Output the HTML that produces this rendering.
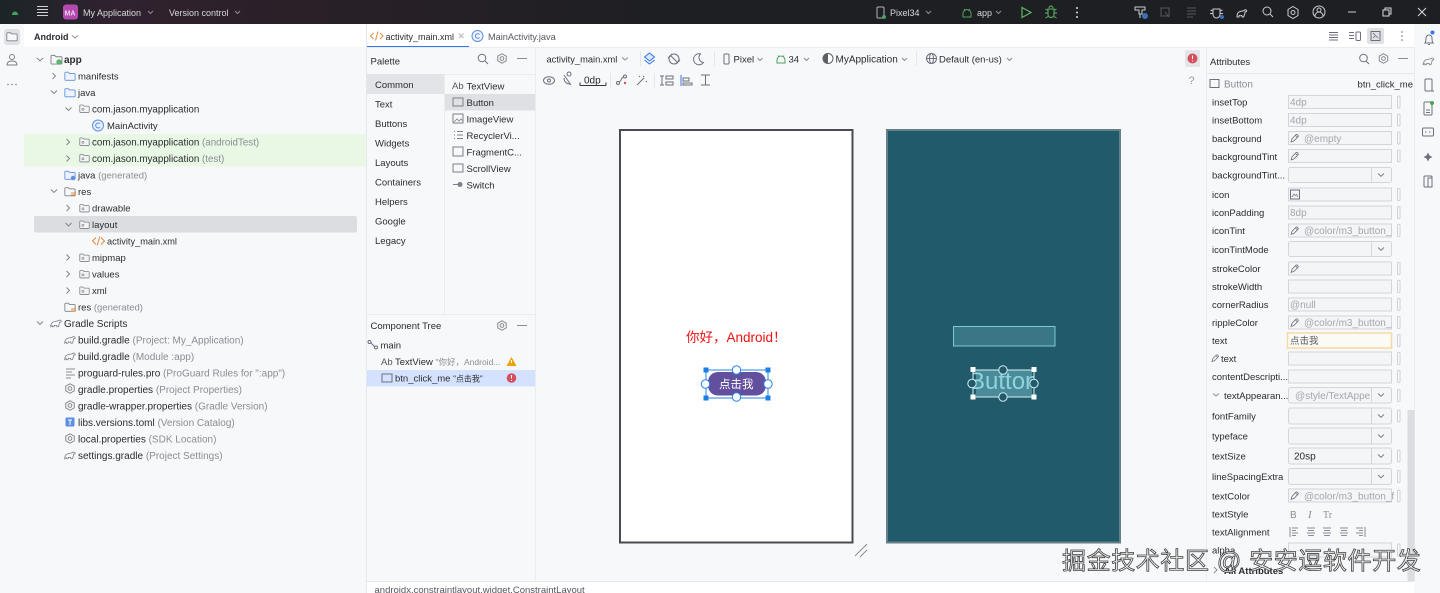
<!DOCTYPE html>
<html><head><meta charset="utf-8"><style>
html,body{margin:0;padding:0;width:1440px;height:593px;overflow:hidden;background:#fff}
svg.root{display:block;filter:blur(.3px)}
text{font-family:"Liberation Sans","Noto Sans CJK SC",sans-serif;font-size:10px;fill:#2a2c30}
.g{fill:#8a8d94}.w{fill:#d8dadf;font-size:9px}.l{font-size:9.5px}.s{font-size:9.5px}
.i{fill:none;stroke:#6c707e;stroke-width:1}
.f{fill:#f4f5f7;stroke:#d3d5da;stroke-width:1}
.ph{fill:#a3a6ad}
</style></head><body>
<svg class="root" width="1440" height="593" viewBox="0 0 1440 593" xmlns="http://www.w3.org/2000/svg">
<defs>
<linearGradient id="tb" x1="0" x2="1" y1="0" y2="0"><stop offset="0" stop-color="#1c2427"/><stop offset=".08" stop-color="#30222f"/><stop offset=".2" stop-color="#2a2028"/><stop offset=".45" stop-color="#1e1f23"/><stop offset="1" stop-color="#1e1f22"/></linearGradient>
<symbol id="fo" viewBox="0 0 14 12" overflow="visible"><path d="M1 2.5a1 1 0 0 1 1-1h3l1.5 1.5H12a1 1 0 0 1 1 1V10a1 1 0 0 1-1 1H2a1 1 0 0 1-1-1z" fill="#eef3ff" stroke="#5d8fe0"/></symbol>
<symbol id="fg" viewBox="0 0 14 12" overflow="visible"><path d="M1 2.5a1 1 0 0 1 1-1h3l1.5 1.5H12a1 1 0 0 1 1 1V10a1 1 0 0 1-1 1H2a1 1 0 0 1-1-1z" fill="#f7f8fa" stroke="#7c8088"/></symbol>
<symbol id="pk" viewBox="0 0 14 12" overflow="visible"><path d="M1 2.5a1 1 0 0 1 1-1h3l1.5 1.5H12a1 1 0 0 1 1 1V10a1 1 0 0 1-1 1H2a1 1 0 0 1-1-1z" fill="#f2f3f5" stroke="#7c8088"/><circle cx="5" cy="7" r="1.3" fill="none" stroke="#7c8088" stroke-width=".8"/></symbol>
<symbol id="ge" viewBox="0 0 12 12" overflow="visible"><path d="M6 .8l4.6 2.6v5.2L6 11.2 1.4 8.6V3.4z" fill="none" stroke="#7c8088"/><circle cx="6" cy="6" r="2" fill="none" stroke="#7c8088"/></symbol>
<symbol id="gr" viewBox="0 0 13 10" overflow="visible"><path d="M.6 9.2c0-3 1.5-5 3.5-5.6C6 3 8 3 9.3 2.4c.9-.9 2.6-.9 3 .4.2 1-.7 1.5-1.6 1.1-.3 2-1 3.6-1.5 5.3H7.6L7.2 7.7c-1 .3-1.6.3-2.6 0L4.2 9.2H2.6L2.3 8z" fill="none" stroke="#7c8088" stroke-width=".9"/></symbol>
<symbol id="pe" viewBox="0 0 11 11" overflow="visible"><path d="M1.2 9.8l1-3.4 4-4.2a1.4 1.4 0 0 1 2.3 2.3l-4.1 4.2z M6 2.6l2.1 2.1" fill="none" stroke="#6c707e" stroke-width=".9"/></symbol>
</defs>

<!-- base -->
<rect width="1440" height="593" fill="#ffffff"/>
<rect x="0" y="24" width="24" height="569" fill="#f7f8fa"/>
<rect x="24" y="47" width="342" height="546" fill="#f7f8fa"/>
<rect x="24" y="24" width="342" height="23" fill="#fff"/>
<rect x="367" y="47" width="1047" height="534" fill="#f7f8fa"/>
<rect x="536" y="94" width="670" height="487" fill="#f7f8fa"/>
<rect x="1414" y="47" width="26" height="546" fill="#f7f8fa"/>
<rect x="1414" y="24" width="26" height="23" fill="#f7f8fa"/>
<rect x="366" y="24" width="1" height="569" fill="#e6e7ea"/>

<!-- title bar -->
<rect width="1440" height="24" fill="url(#tb)"/>
<path d="M12 14.5a3 3 0 0 1 6 0v.5h-6z" fill="#3ba55c"/>
<path d="M37 6.5h11M37 9.5h11M37 12.5h11M37 15.5h11" stroke="#cfd1d6" stroke-width="1.1"/>
<rect x="63" y="4.5" width="15" height="15" rx="3" fill="#b44ab0"/>
<text x="64.500" y="15.500" style="font-size:7px;font-weight:bold;fill:#f0d5ee">MA</text>
<text x="83" y="16" class="w">My Application</text>
<path d="M148 11l2.5 2.5 2.5-2.5M235 11l2.5 2.5 2.5-2.5" style="fill:none;stroke:#8a8d94"/>
<text x="169" y="16" class="w">Version control</text>
<rect x="877" y="7" width="7" height="11" rx="1" fill="none" stroke="#b0b3b9"/><circle cx="884" cy="17" r="2" fill="#4fa05c"/>
<text x="890" y="16" class="w">Pixel34</text>
<path d="M926 11l2.5 2.5 2.5-2.5M996 11l2.5 2.5 2.5-2.5" style="fill:none;stroke:#8a8d94"/>
<path d="M963 17v-3.5a4 4 0 0 1 8 0V17z M964 9l1.4 2M970 9l-1.4 2" fill="none" stroke="#4fa05c"/>
<text x="977" y="16" class="w">app</text>
<path d="M1022 7.5l9 5-9 5z" fill="none" stroke="#5fb865" stroke-width="1.2"/>
<path d="M1048 9h6v5.5a3 3 0 0 1-6 0z M1045.5 9l2.5 1.5M1056.5 9l-2.5 1.5M1045 13h3M1054 13h3M1045.5 18l2.5-1.5M1056.5 18l-2.5-1.5M1049 8a2 2 0 0 1 4 0" fill="none" stroke="#5fb865"/>
<circle cx="1077" cy="8" r="1" fill="#d8dadf"/><circle cx="1077" cy="12.5" r="1" fill="#d8dadf"/><circle cx="1077" cy="17" r="1" fill="#d8dadf"/>
<path d="M1135 7h10v3h-3v4h-3v-4h-4zM1140 14v4" fill="none" stroke="#c9ccd2"/><circle cx="1145" cy="16" r="3" fill="#3b6fc0"/>
<path d="M1161 8h8v8h-8zM1165 12l4 5" fill="none" stroke="#55575d"/>
<path d="M1187 8h9M1187 11h9M1187 14h9M1187 17h6" fill="none" stroke="#55575d"/>
<path d="M1213 9h7v5.5a3.5 3.5 0 0 1-7 0zM1210.5 10l2.5 1M1222.5 10l-2.5 1M1210 13.5h3M1220 13.5h3" fill="none" stroke="#c9ccd2"/><circle cx="1222" cy="17" r="2" fill="#3b6fc0"/>
<path d="M1237 17c0-3 1-5 3-5.500 2-.5 3-.5 4-1 .8-1 2.400-1 2.700.2.200 1-1 1.300-1.500 1-.2 2-.8 3.500-1.500 5.300h-1.500l-.4-1.500c-1 .3-1.600.3-2.600 0l-.4 1.500z" fill="none" stroke="#c9ccd2"/>
<circle cx="1267" cy="11" r="4" fill="none" stroke="#c9ccd2"/><path d="M1270 14l3 3" stroke="#c9ccd2"/>
<path d="M1293 6.500l5 3v6l-5 3-5-3v-6z" fill="none" stroke="#c9ccd2"/><circle cx="1293" cy="12.500" r="2" fill="none" stroke="#c9ccd2"/>
<circle cx="1319" cy="12" r="6" fill="none" stroke="#c9ccd2"/><circle cx="1319" cy="10" r="2" fill="none" stroke="#c9ccd2"/><path d="M1315 16a4 4 0 0 1 8 0" fill="none" stroke="#c9ccd2"/>
<path d="M1348 12h8" stroke="#c9ccd2"/>
<path d="M1383 10h6v6h-6zM1385 10V8h6v6h-2" fill="none" stroke="#d8dadf"/>
<path d="M1418 8l8 8M1426 8l-8 8" stroke="#d8dadf"/>

<!-- left strip -->
<rect x="4" y="29" width="16" height="16" rx="3" fill="#dfe1e5"/>
<use href="#fg" x="6" y="31" width="12" height="11"/>
<circle cx="12" cy="57" r="2.500" fill="none" stroke="#7c8088"/><path d="M7 65c0-3 2-4 5-4s5 1 5 4z" fill="none" stroke="#7c8088"/>
<circle cx="8" cy="84.500" r=".7" fill="#6c707e"/><circle cx="12" cy="84.500" r=".7" fill="#6c707e"/><circle cx="16" cy="84.500" r=".7" fill="#6c707e"/>

<!-- Project panel -->
<text x="34" y="40" style="font-size:9px;font-weight:bold">Android</text>
<path d="M72 35.500l3 2.500 3-2.500" class="i" style="stroke:#8a8d94"/>
<rect x="24" y="134" width="342" height="32.500" fill="#e9f8e5"/>
<rect x="34" y="216" width="323" height="16.500" rx="2" fill="#dcdde1"/>

<!-- chevrons tree -->
<g fill="none" stroke="#7c8088" stroke-width=".9">
<path d="M37 58l3 3 3-3M51 90.500l3 3 3-3M65.500 107.500l3 3 3-3M51 189.500l3 3 3-3M65.500 223l3 3 3-3M37 321.500l3 3 3-3"/>
<path d="M52.500 73l3 3-3 3M66.500 139l3 3-3 3M66.500 155.500l3 3-3 3M66.500 205l3 3-3 3M66.500 254.500l3 3-3 3M66.500 271l3 3-3 3M66.500 287.500l3 3-3 3"/>
</g>
<use href="#fg" x="50" y="54" width="13" height="11"/><circle cx="59" cy="62" r="2.700" fill="#5db56a"/>
<use href="#fo" x="64" y="70.500" width="12" height="11"/>
<use href="#fo" x="64" y="87" width="12" height="11"/>
<use href="#pk" x="79" y="103.500" width="11" height="10"/>
<circle cx="98" cy="125.500" r="5.500" fill="#e6efff" stroke="#5d8fe0"/><path d="M100 123.800a2.500 2.500 0 1 0 0 3.400" fill="none" stroke="#5d8fe0"/>
<use href="#pk" x="79" y="136.500" width="11" height="10"/>
<use href="#pk" x="79" y="153" width="11" height="10"/>
<use href="#fo" x="64" y="169.500" width="12" height="11"/><circle cx="73" cy="178" r="2.200" fill="#5d8fe0"/>
<use href="#fg" x="64" y="186" width="12" height="11"/><path d="M71 195h5M71 193h5" stroke="#e08a3c"/>
<use href="#pk" x="79" y="203" width="11" height="10"/>
<use href="#pk" x="79" y="219.500" width="11" height="10"/>
<path d="M96 237.500l-3.500 3.500 3.500 3.500M101 237.500l3.500 3.500-3.500 3.500M99.800 236.500l-2.600 9" fill="none" stroke="#e08a3c"/>
<use href="#pk" x="79" y="252.500" width="11" height="10"/>
<use href="#pk" x="79" y="269" width="11" height="10"/>
<use href="#pk" x="79" y="285.500" width="11" height="10"/>
<use href="#fg" x="64" y="301.500" width="12" height="11"/><path d="M71 311h5M71 309h5" stroke="#e08a3c"/>
<use href="#gr" x="50" y="318.500" width="12" height="9"/>
<use href="#gr" x="64" y="335" width="12" height="9"/>
<use href="#gr" x="64" y="351.500" width="12" height="9"/>
<path d="M66 369h9M66 372h6M66 375h9M66 378h5" stroke="#8a8d94"/>
<use href="#ge" x="64.500" y="383" width="11" height="11"/>
<use href="#ge" x="64.500" y="400" width="11" height="11"/>
<rect x="65.500" y="417.500" width="9" height="9" rx="1" fill="#5d8fe0"/><path d="M68 420h4M70 420v5" stroke="#fff"/>
<use href="#ge" x="64.500" y="433" width="11" height="11"/>
<use href="#gr" x="64" y="450.500" width="12" height="9"/>

<text x="64" y="63" style="font-weight:bold;font-size:10px">app</text>
<text x="78" y="79.500" class="s">manifests</text>
<text x="78" y="96" class="s">java</text>
<text x="92" y="112.500" style="font-size:9.800px">com.jason.myapplication</text>
<text x="107" y="129" class="s">MainActivity</text>
<text x="92" y="145.500" style="font-size:9.800px">com.jason.myapplication <tspan class="g">(androidTest)</tspan></text>
<text x="92" y="162" style="font-size:9.800px">com.jason.myapplication <tspan class="g">(test)</tspan></text>
<text x="78" y="178.500" class="s">java <tspan class="g">(generated)</tspan></text>
<text x="78" y="195" class="s">res</text>
<text x="92" y="211.500" class="s">drawable</text>
<text x="92" y="228" class="s">layout</text>
<text x="107" y="244.500" style="font-size:9.200px">activity_main.xml</text>
<text x="92" y="261" class="s">mipmap</text>
<text x="92" y="277.500" class="s">values</text>
<text x="92" y="294" class="s">xml</text>
<text x="78" y="310.500" class="s">res <tspan class="g">(generated)</tspan></text>
<text x="64" y="327">Gradle Scripts</text>
<text x="78" y="343.500">build.gradle <tspan class="g">(Project: My_Application)</tspan></text>
<text x="78" y="360">build.gradle <tspan class="g">(Module :app)</tspan></text>
<text x="78" y="376.500">proguard-rules.pro <tspan class="g">(ProGuard Rules for ":app")</tspan></text>
<text x="78" y="393">gradle.properties <tspan class="g">(Project Properties)</tspan></text>
<text x="78" y="409.500">gradle-wrapper.properties <tspan class="g">(Gradle Version)</tspan></text>
<text x="78" y="426">libs.versions.toml <tspan class="g">(Version Catalog)</tspan></text>
<text x="78" y="442.500">local.properties <tspan class="g">(SDK Location)</tspan></text>
<text x="78" y="459">settings.gradle <tspan class="g">(Project Settings)</tspan></text>

<!-- editor tabs -->
<rect x="367" y="46" width="102" height="2" fill="#3574f0"/>
<path d="M373.500 33l-3 3 3 3M380 33l3 3-3 3M378 31.500l-2.500 9" fill="none" stroke="#e08a3c"/>
<text x="385.500" y="40" style="font-size:9px">activity_main.xml</text>
<path d="M459 33.500l4.500 4.500M463.500 33.500L459 38" stroke="#b5b7bd"/>
<circle cx="477.500" cy="36" r="5.500" fill="#eef3ff" stroke="#5d8fe0"/><path d="M479.500 34.500a2.300 2.300 0 1 0 0 3" fill="none" stroke="#5d8fe0"/>
<text x="488" y="40" style="fill:#55585f;font-size:9.200px">MainActivity.java</text>
<path d="M1329 32.500h9M1329 35h9M1329 37.500h9M1329 40h9" stroke="#6c707e"/>
<path d="M1349 32.500h5M1349 35.500h5M1349 38.500h5" stroke="#6c707e"/><rect x="1356" y="32" width="4.500" height="8.500" rx="1" fill="none" stroke="#6c707e"/>
<rect x="1367" y="28" width="17" height="16" rx="2" fill="#dfe1e5"/><rect x="1371" y="31.500" width="9" height="9" fill="none" stroke="#6c707e"/><path d="M1373 33l5 5M1373 38l2-2" stroke="#6c707e" stroke-width=".8"/>
<circle cx="1402" cy="32" r=".8" fill="#6c707e"/><circle cx="1402" cy="36" r=".8" fill="#6c707e"/><circle cx="1402" cy="40" r=".8" fill="#6c707e"/>

<!-- palette -->
<rect x="367" y="47" width="1047" height="1" fill="#ebecf0"/>
<text x="370.500" y="64.500" class="l">Palette</text>
<circle cx="482" cy="58" r="3.800" class="i"/><path d="M485 61l3 3" class="i"/>
<use href="#ge" x="496.500" y="53" width="11" height="11"/>
<path d="M517 58.500h10" stroke="#8a8d94"/>
<rect x="367" y="74" width="168" height="1" fill="#ebecf0"/>
<rect x="535" y="47" width="1" height="534" fill="#ebecf0"/>
<rect x="444" y="74" width="1" height="240" fill="#ebecf0"/>
<rect x="367" y="74" width="77" height="20" fill="#e3e4e7"/>
<rect x="445" y="94" width="90" height="16.500" fill="#dfe0e4"/>
<g>
<text x="375" y="88" class="l">Common</text>
<text x="375" y="107.500" class="l">Text</text>
<text x="375" y="127" class="l">Buttons</text>
<text x="375" y="146.500" class="l">Widgets</text>
<text x="375" y="166" class="l">Layouts</text>
<text x="375" y="185.500" class="l">Containers</text>
<text x="375" y="205" class="l">Helpers</text>
<text x="375" y="224.500" class="l">Google</text>
<text x="375" y="244" class="l">Legacy</text>
</g>
<text x="452" y="89" style="fill:#55585f;font-size:9.500px">Ab</text>
<text x="466.500" y="89.500" class="s">TextView</text>
<rect x="453" y="98" width="10" height="8" fill="none" stroke="#7c8088"/><text x="466.500" y="106" class="s">Button</text>
<rect x="453" y="114" width="10" height="9" fill="none" stroke="#7c8088"/><path d="M454 122l3-3 2 2 2-2 2 2" fill="none" stroke="#7c8088" stroke-width=".8"/><text x="466.500" y="122.500" class="s">ImageView</text>
<path d="M454 131.500h1M457 131.500h6M454 135h1M457 135h6M454 138.500h1M457 138.500h6" stroke="#7c8088"/><text x="466.500" y="139" class="s">RecyclerVi...</text>
<rect x="453" y="147" width="10" height="9" fill="none" stroke="#7c8088"/><text x="466.500" y="155.500" class="s">FragmentC...</text>
<rect x="453" y="164" width="10" height="8" fill="none" stroke="#7c8088"/><text x="466.500" y="172" class="s">ScrollView</text>
<path d="M453 184.500h6" stroke="#7c8088"/><circle cx="460" cy="184.500" r="2.500" fill="#7c8088"/><text x="466.500" y="188.500" class="s">Switch</text>

<!-- component tree -->
<rect x="367" y="314" width="168" height="1" fill="#ebecf0"/>
<text x="370.500" y="329" class="l">Component Tree</text>
<use href="#ge" x="496.500" y="320" width="11" height="11"/>
<path d="M517 325.500h10" stroke="#8a8d94"/>
<rect x="367" y="370" width="168" height="16.500" fill="#d4e2ff"/>
<circle cx="369.500" cy="342" r="1.500" class="i"/><circle cx="376" cy="347.500" r="1.500" class="i"/><path d="M371 343l3.500 3.500" class="i"/>
<text x="380.500" y="348.500" class="s">main</text>
<text x="381" y="365" style="font-size:9.500px;fill:#55585f">Ab</text>
<text x="395" y="365" class="s">TextView <tspan class="g" style="font-size:8.500px">"你好，Android...</tspan></text>
<path d="M511.500 357l5 9h-10z" fill="#eda200"/><path d="M511.500 360v3" stroke="#fff"/>
<rect x="382" y="374" width="10" height="8" fill="none" stroke="#6c707e"/>
<text x="395" y="381.500" class="s">btn_click_me <tspan style="font-size:8px">"点击我"</tspan></text>
<circle cx="511.500" cy="378" r="4.800" fill="#d64f5e"/><path d="M511.500 375v3.500M511.500 380v1" stroke="#fff"/>

<!-- design toolbar -->
<text x="546.500" y="62.500" style="font-size:9.300px">activity_main.xml</text>
<path d="M622 57.500l3 2.500 3-2.500" class="i" style="stroke:#8a8d94"/>
<rect x="640" y="51" width="1" height="15" fill="#e6e7ea"/>
<path d="M649.500 53l5 4-5 4-5-4z" fill="#dbe7ff" stroke="#3574f0"/><path d="M644.500 60l5 4 5-4" fill="none" stroke="#3574f0"/>
<circle cx="674" cy="59" r="5" class="i"/><path d="M670.500 55.500l7 7M668 58l4-4M680 60l-4 4" class="i"/>
<path d="M700.500 54a5.500 5.500 0 1 0 3 8.500 5 5 0 0 1-3-8.500z" class="i"/>
<rect x="714" y="51" width="1" height="15" fill="#e6e7ea"/>
<rect x="724" y="54" width="5" height="10" rx="1" class="i"/>
<text x="733.500" y="62.500" class="s">Pixel</text>
<path d="M757.500 58l2.500 2.500 2.500-2.500M804 58l2.500 2.500 2.500-2.500M902 58l2.500 2.500 2.500-2.500M1007 58l2.500 2.500 2.500-2.500" class="i" style="stroke:#8a8d94"/>
<path d="M777 63v-3a4 4 0 0 1 8 0v3z M778 55.500l1 1.500M784 55.500l-1 1.500" fill="none" stroke="#4fa05c"/>
<text x="788.500" y="62.500" class="s">34</text>
<circle cx="828" cy="58.500" r="5" fill="#fff" stroke="#5c5f66"/><path d="M828 53.500a5 5 0 0 0 0 10z" fill="#5c5f66"/>
<text x="835.500" y="62.500">MyApplication</text>
<rect x="916" y="51" width="1" height="15" fill="#e6e7ea"/>
<circle cx="931.500" cy="58.500" r="5" class="i"/><ellipse cx="931.500" cy="58.500" rx="2" ry="5" class="i"/><path d="M926.500 58.500h10" class="i"/>
<text x="939" y="62.500" class="s">Default (en-us)</text>
<rect x="1185" y="50" width="15" height="17" rx="2" fill="#e3e4e7"/><circle cx="1192.500" cy="58.500" r="5" fill="#d64f5e"/><path d="M1192.500 55.500v3.500M1192.500 60.500v1" stroke="#fff"/>
<text x="1188.500" y="84" style="font-size:11px;fill:#9a9da4">?</text>
<ellipse cx="549" cy="80.500" rx="5.500" ry="3.800" class="i"/><circle cx="549" cy="80.500" r="1.500" class="i"/>
<path d="M564 75l7 10M564 78c0 4 3 6 6 6M569 76a2 2 0 1 1 .1 0" fill="none" stroke="#6c707e"/>
<path d="M580 85.500v-3M580 85.500h26M606 85.500v-3" fill="none" stroke="#33353a"/><text x="584" y="83.500" style="font-size:10px">0dp</text>
<rect x="610" y="73" width="1" height="15" fill="#e6e7ea"/>
<circle cx="618" cy="83" r="1.500" class="i"/><circle cx="625" cy="76.500" r="1.500" class="i"/><path d="M619 82c3-1 1-4 5-5" class="i"/><circle cx="625" cy="83" r="1.200" fill="#d64f5e"/>
<path d="M637 85l7-7M643 76l1 1M639 76l1 1M646 81l1 1" fill="none" stroke="#6c707e"/>
<rect x="654" y="73" width="1" height="15" fill="#e6e7ea"/>
<path d="M662 76v9M660 76h4M660 85h4M666 76h7v3h-7zM666 82h7v3h-7z" class="i"/>
<path d="M681 75v11" stroke="#3574f0"/><path d="M683 78h6v3h-6zM683 83h9v2h-9z" class="i"/>
<path d="M701 75h9M705.500 75v10M701 85h9" class="i"/>

<!-- canvas phones -->
<rect x="620" y="130" width="232.500" height="412.500" fill="#fff" stroke="#4a4b4e" stroke-width="2"/>
<rect x="887" y="130" width="233" height="412.500" fill="#215a6b" stroke="#66808a" stroke-width="2"/>
<text x="686" y="342" style="font-size:13.500px;fill:#f01010">你好，Android！</text>
<rect x="708" y="372" width="58" height="23.500" rx="10" fill="#62509f"/>
<text x="719" y="388" style="font-size:11.500px;fill:#fff">点击我</text>
<rect x="706" y="370" width="62" height="28" fill="none" stroke="#2186e8"/>
<g fill="#1a7fe6"><rect x="703.500" y="367.500" width="5" height="5"/><rect x="765.500" y="367.500" width="5" height="5"/><rect x="703.500" y="395.500" width="5" height="5"/><rect x="765.500" y="395.500" width="5" height="5"/></g>
<g fill="#fff" stroke="#2186e8"><circle cx="736.500" cy="370" r="4.200"/><circle cx="736.500" cy="397" r="4.200"/><circle cx="705.500" cy="384" r="4.200"/><circle cx="768" cy="384" r="4.200"/></g>
<rect x="953.500" y="326.500" width="101.500" height="19.500" fill="#3a7786" stroke="#7ec8d0"/>
<rect x="976" y="370" width="56" height="27" fill="#4a8a99"/>
<svg x="973" y="366" width="61" height="34" viewBox="973 366 61 34"><text x="969" y="389" style="font-size:24px;fill:#8fd3dc">Button</text></svg>
<rect x="973" y="370" width="61" height="27" fill="none" stroke="#d9f2f5"/>
<g fill="#fff"><rect x="970.500" y="367" width="5" height="5"/><rect x="1031.500" y="367" width="5" height="5"/><rect x="970.500" y="394.500" width="5" height="5"/><rect x="1031.500" y="394.500" width="5" height="5"/></g>
<g fill="#215a6b" stroke="#cfeef2"><circle cx="1003" cy="370" r="4.200"/><circle cx="1003" cy="397" r="4.200"/><circle cx="972" cy="383.500" r="4.200"/><circle cx="1034" cy="383.500" r="4.200"/></g>
<path d="M855 556l12-12M860 557l7-7" stroke="#8a8d94"/>

<!-- attributes panel -->
<rect x="1206" y="47" width="1" height="534" fill="#ebecf0"/>
<rect x="1414" y="47" width="1" height="534" fill="#ebecf0"/>
<rect x="1207" y="73" width="207" height="1" fill="#e6e7ea"/>
<text x="1210" y="65" class="l">Attributes</text>
<circle cx="1363.500" cy="58" r="3.800" class="i"/><path d="M1366 61l3 3" class="i"/>
<use href="#ge" x="1378" y="53" width="11" height="11"/>
<path d="M1398 58.500h10" stroke="#8a8d94"/>
<rect x="1210" y="79.500" width="9" height="8" fill="none" stroke="#6c707e"/>
<text x="1224" y="87.500" class="g">Button</text>
<text x="1413" y="87.500" text-anchor="end" class="s">btn_click_me</text>

<!-- attr labels -->
<g>
<text x="1212" y="105.500" class="l">insetTop</text>
<text x="1212" y="123.500" class="l">insetBottom</text>
<text x="1212" y="142" class="l">background</text>
<text x="1212" y="160" class="l">backgroundTint</text>
<text x="1212" y="178.500" class="l">backgroundTint...</text>
<text x="1212" y="198" class="l">icon</text>
<text x="1212" y="216" class="l">iconPadding</text>
<text x="1212" y="234" class="l">iconTint</text>
<text x="1212" y="253" class="l">iconTintMode</text>
<text x="1212" y="272" class="l">strokeColor</text>
<text x="1212" y="290" class="l">strokeWidth</text>
<text x="1212" y="308" class="l">cornerRadius</text>
<text x="1212" y="326" class="l">rippleColor</text>
<text x="1212" y="344" class="l">text</text>
<text x="1221" y="362" class="l">text</text>
<text x="1212" y="380" class="l">contentDescripti...</text>
<text x="1224" y="399" class="l">textAppearan...</text>
<text x="1212" y="419.500" class="l">fontFamily</text>
<text x="1212" y="439.500" class="l">typeface</text>
<text x="1212" y="459.500" class="l">textSize</text>
<text x="1212" y="480" class="l">lineSpacingExtra</text>
<text x="1212" y="499.500" class="l">textColor</text>
<text x="1212" y="517.500" class="l">textStyle</text>
<text x="1212" y="535.500" class="l">textAlignment</text>
<text x="1212" y="553.500" class="l">alpha</text>
</g>
<use href="#pe" x="1211" y="353" width="9" height="10"/>
<path d="M1213 393.500l3 2.500 3-2.500" class="i" style="stroke:#8a8d94"/>

<!-- attr fields -->
<g class="f">
<rect x="1288.500" y="95.500" width="103" height="13"/>
<rect x="1288.500" y="113.500" width="103" height="13"/>
<rect x="1288.500" y="131.500" width="103" height="13"/>
<rect x="1288.500" y="149.500" width="103" height="13"/>
<rect x="1288.500" y="167.500" width="103" height="15" rx="2"/>
<rect x="1288.500" y="188" width="103" height="13"/>
<rect x="1288.500" y="206" width="103" height="13"/>
<rect x="1288.500" y="224" width="103" height="13"/>
<rect x="1288.500" y="241.500" width="103" height="15" rx="2"/>
<rect x="1288.500" y="262" width="103" height="13"/>
<rect x="1288.500" y="280" width="103" height="13"/>
<rect x="1288.500" y="298" width="103" height="13"/>
<rect x="1288.500" y="316" width="103" height="13"/>
<rect x="1288.500" y="352" width="103" height="13"/>
<rect x="1288.500" y="370" width="103" height="13"/>
<rect x="1288.500" y="387.500" width="103" height="15.500" rx="2"/>
<rect x="1288.500" y="408" width="103" height="16" rx="2"/>
<rect x="1288.500" y="428" width="103" height="16" rx="2"/>
<rect x="1288.500" y="448" width="103" height="16" rx="2"/>
<rect x="1288.500" y="468.500" width="103" height="16" rx="2"/>
<rect x="1288.500" y="489" width="103" height="13"/>
<rect x="1288.500" y="543" width="103" height="14"/>
</g>
<rect x="1287.500" y="333" width="104" height="15" fill="#fbfbf6" stroke="#f6d9a3" stroke-width="1.500"/>
<!-- small toggles -->
<g fill="#fafbfc" stroke="#cfd1d6">
<rect x="1397.500" y="96" width="2.500" height="12" rx="1"/><rect x="1397.500" y="114" width="2.500" height="12" rx="1"/><rect x="1397.500" y="132" width="2.500" height="12" rx="1"/><rect x="1397.500" y="150" width="2.500" height="12" rx="1"/>
<rect x="1397.500" y="188.500" width="2.500" height="12" rx="1"/><rect x="1397.500" y="206.500" width="2.500" height="12" rx="1"/><rect x="1397.500" y="224.500" width="2.500" height="12" rx="1"/>
<rect x="1397.500" y="262.500" width="2.500" height="12" rx="1"/><rect x="1397.500" y="280.500" width="2.500" height="12" rx="1"/><rect x="1397.500" y="298.500" width="2.500" height="12" rx="1"/><rect x="1397.500" y="316.500" width="2.500" height="12" rx="1"/>
<rect x="1397.500" y="334.500" width="2.500" height="12" rx="1"/><rect x="1397.500" y="352.500" width="2.500" height="12" rx="1"/><rect x="1397.500" y="370.500" width="2.500" height="12" rx="1"/>
<rect x="1397.500" y="389.500" width="2.500" height="12" rx="1"/><rect x="1397.500" y="410" width="2.500" height="12" rx="1"/><rect x="1397.500" y="450" width="2.500" height="12" rx="1"/><rect x="1397.500" y="470.500" width="2.500" height="12" rx="1"/><rect x="1397.500" y="490" width="2.500" height="12" rx="1"/><rect x="1397.500" y="544" width="2.500" height="12" rx="1"/>
</g>
<!-- dropdown separators + chevrons -->
<g stroke="#d3d5da"><path d="M1371.500 168v14M1371.500 242v14M1371.500 388v14M1371.500 408.500v15M1371.500 428.500v15M1371.500 448.500v15M1371.500 469v15"/></g>
<g fill="none" stroke="#7c8088"><path d="M1378 173.500l3 2.800 3-2.800M1378 247.500l3 2.800 3-2.800M1378 393.500l3 2.800 3-2.800M1378 414.500l3 2.800 3-2.800M1378 434.500l3 2.800 3-2.800M1378 454.500l3 2.800 3-2.800M1378 475l3 2.800 3-2.800"/></g>
<!-- field values -->
<text x="1290" y="105.500" class="ph">4dp</text>
<text x="1290" y="123.500" class="ph">4dp</text>
<use href="#pe" x="1290" y="133" width="10" height="10"/><text x="1304" y="142" class="ph">@empty</text>
<use href="#pe" x="1290" y="151" width="10" height="10"/>
<rect x="1290.500" y="190" width="9" height="9" fill="none" stroke="#6c707e"/><path d="M1292 197l2-3 1.500 1.500 1-1 1.500 2.500" fill="none" stroke="#6c707e" stroke-width=".7"/>
<text x="1290" y="216" class="ph">8dp</text>
<use href="#pe" x="1290" y="225.500" width="10" height="10"/><text x="1304" y="234" class="ph">@color/m3_button_f</text>
<use href="#pe" x="1290" y="263.500" width="10" height="10"/>
<text x="1290" y="308" class="ph">@null</text>
<use href="#pe" x="1290" y="317.500" width="10" height="10"/><text x="1304" y="326" class="ph">@color/m3_button_r</text>
<rect x="1392" y="224" width="4" height="14" fill="#f7f8fa"/><rect x="1392" y="316" width="4" height="14" fill="#f7f8fa"/><rect x="1392" y="489" width="4" height="14" fill="#f7f8fa"/>
<text x="1290" y="344" style="font-size:9.500px;fill:#55585f">点击我</text>
<text x="1295" y="399" class="ph">@style/TextAppe</text>
<text x="1294" y="459.500">20sp</text>
<use href="#pe" x="1290" y="490.500" width="10" height="10"/><text x="1304" y="499.500" class="ph">@color/m3_button_f</text>
<text x="1290" y="518" style="font-weight:normal;fill:#8a8d94">B</text>
<text x="1308" y="518" style="font-style:italic;font-family:'Liberation Serif',serif;fill:#8a8d94;font-size:11px">I</text>
<text x="1323" y="518" style="font-family:'Liberation Serif',serif;fill:#8a8d94">Tr</text>
<g stroke="#8a8d94" fill="none"><path d="M1290 527v10M1292 528h6M1292 530.500h4M1292 533h6M1292 535.500h4"/><path d="M1307 528h8M1308 530.500h6M1307 533h8M1308 535.500h6"/><path d="M1323 528h8M1324 530.500h6M1323 533h8M1324 535.500h6"/><path d="M1340 528h8M1341 530.500h6M1340 533h8M1341 535.500h6"/><path d="M1365 527v10M1356 528h7M1359 530.500h4M1356 533h7M1359 535.500h4"/></g>
<path d="M1214 567l3 3-3 3" class="i" style="stroke:#8a8d94"/>
<text x="1224" y="574" style="font-weight:bold;font-size:9.500px">All Attributes</text>

<!-- scrollbar -->
<rect x="1407.500" y="410" width="7" height="171" fill="#dcdde0"/>
<!-- bottom status -->
<rect x="367" y="581" width="1047" height="1" fill="#e6e7ea"/>
<rect x="367" y="582" width="1047" height="11" fill="#fff"/>
<text x="374.500" y="593" class="l" style="fill:#55585f">androidx.constraintlayout.widget.ConstraintLayout</text>

<!-- right strip icons -->
<path d="M1425 43c1-1 1-3 1-5a3 3 0 0 1 6 0c0 2 0 4 1 5zM1428 44.500h2" fill="none" stroke="#6c707e"/><circle cx="1432.500" cy="32.500" r="2" fill="#3574f0"/>
<use href="#gr" x="1422.500" y="56.500" width="12" height="9"/>
<rect x="1425" y="79" width="7" height="12" rx="1" class="i"/><path d="M1428 91h6" stroke="#6c707e"/>
<rect x="1424" y="102" width="8" height="13" rx="1" class="i"/><path d="M1426 110h4M1426 112.500h4" stroke="#6c707e"/><circle cx="1432" cy="103" r="2" fill="#4fa05c"/>
<rect x="1422.500" y="128" width="11" height="8" rx="1" class="i"/><path d="M1425 132h1.500M1429 132h1.500" stroke="#6c707e"/>
<path d="M1428 152.500l1.500 3 3 1.500-3 1.500-1.500 3-1.500-3-3-1.500 3-1.500z" fill="#6c707e"/>
<rect x="1424" y="176" width="8" height="11" rx="1" class="i"/><rect x="1428" y="178" width="4" height="9" class="i"/>

<!-- watermark -->
<text x="1062" y="569" style="font-size:24px;letter-spacing:.6px;fill:#f2f2f2;stroke:#404040;stroke-width:.8px">掘金技术社区 @ 安安逗软件开发</text>
</svg>
</body></html>
